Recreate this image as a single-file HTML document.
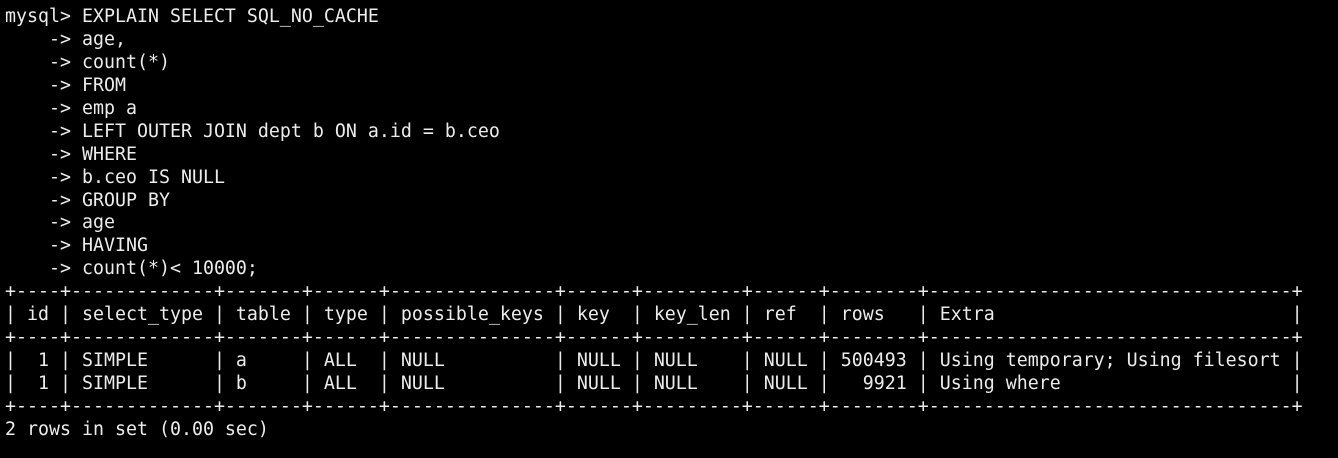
<!DOCTYPE html>
<html><head><meta charset="utf-8"><style>
html,body{margin:0;padding:0;background:#000;width:1338px;height:458px;overflow:hidden}
pre{margin:0;position:absolute;left:5px;top:6px;font-family:"DejaVu Sans Mono","Liberation Mono",monospace;font-size:18.27px;line-height:22.94px;color:#ececec;white-space:pre}
</style></head><body><pre>mysql> EXPLAIN SELECT SQL_NO_CACHE
    -> age,
    -> count(*)
    -> FROM
    -> emp a
    -> LEFT OUTER JOIN dept b ON a.id = b.ceo
    -> WHERE
    -> b.ceo IS NULL
    -> GROUP BY
    -> age
    -> HAVING
    -> count(*)&lt; 10000;
+----+-------------+-------+------+---------------+------+---------+------+--------+---------------------------------+
| id | select_type | table | type | possible_keys | key  | key_len | ref  | rows   | Extra                           |
+----+-------------+-------+------+---------------+------+---------+------+--------+---------------------------------+
|  1 | SIMPLE      | a     | ALL  | NULL          | NULL | NULL    | NULL | 500493 | Using temporary; Using filesort |
|  1 | SIMPLE      | b     | ALL  | NULL          | NULL | NULL    | NULL |   9921 | Using where                     |
+----+-------------+-------+------+---------------+------+---------+------+--------+---------------------------------+
2 rows in set (0.00 sec)</pre></body></html>
